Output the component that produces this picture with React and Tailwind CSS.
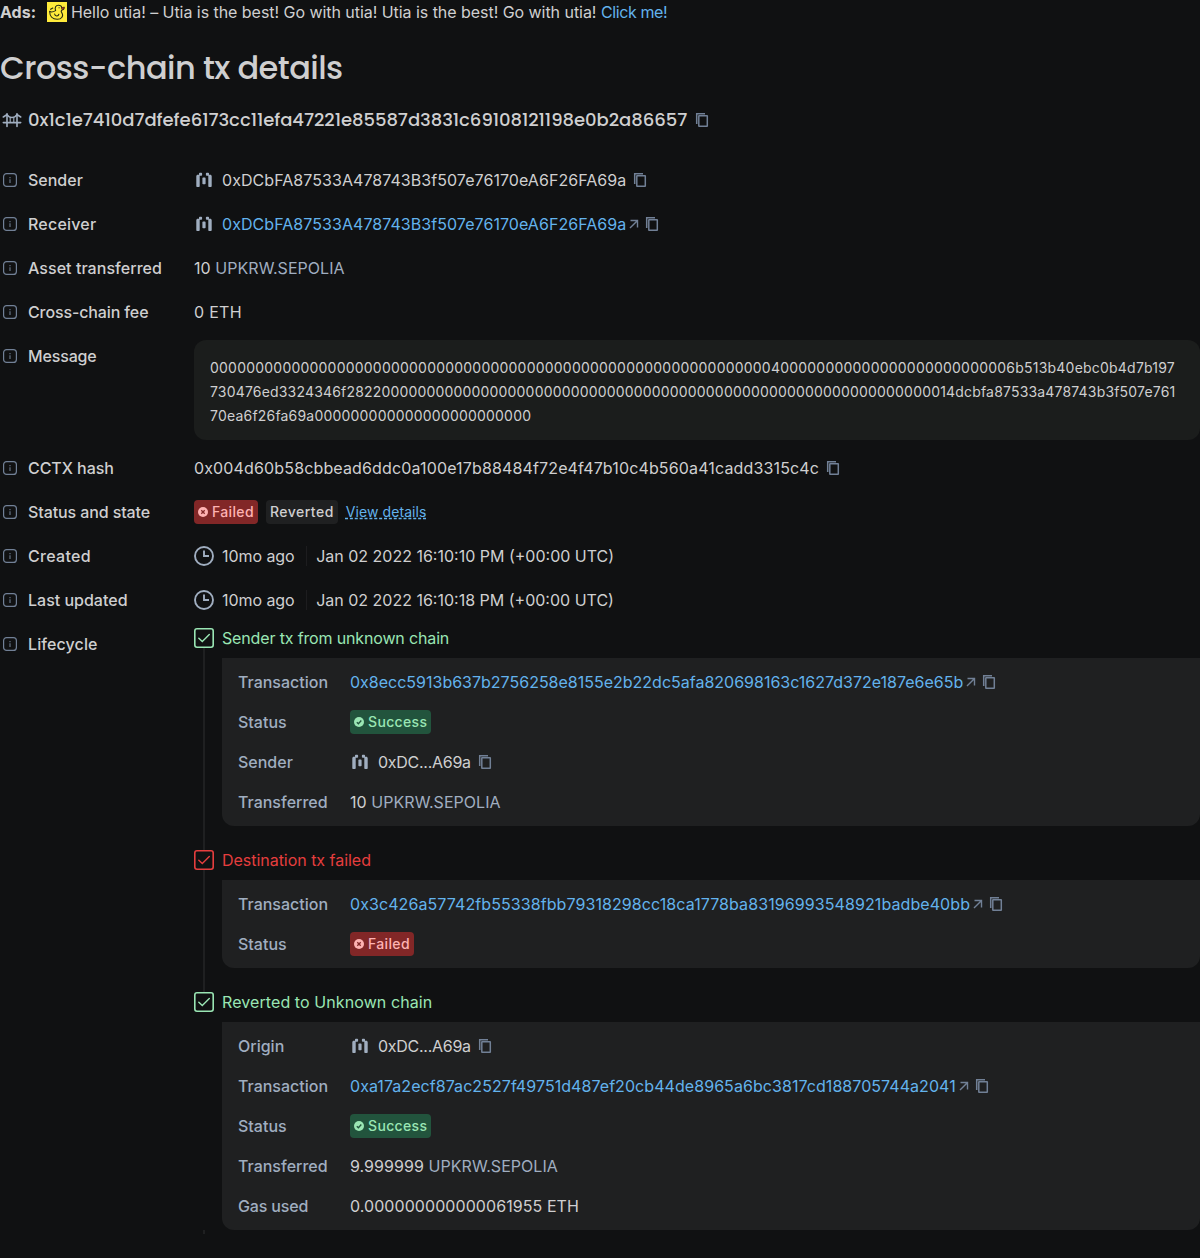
const Info = () => (
  <svg className="w-5 h-5 shrink-0 text-[#718096]" viewBox="0 0 20 20" fill="none">
    <rect x="3.6" y="3.6" width="12.8" height="12.8" rx="3" stroke="currentColor" strokeWidth="1.2" />
    <path d="M9.3 7h1.4v1.2H9.3zM9.3 9.2h1.4v3.8H9.3z" fill="currentColor" fillOpacity="0.75" />
  </svg>
);

const Copy = () => (
  <svg className="w-5 h-5 shrink-0 text-[#718096]" viewBox="0 0 20 20" fill="none" stroke="currentColor" strokeWidth="1.5">
    <path d="M4.7 14V3.8H13" />
    <rect x="6.8" y="5.8" width="8.5" height="10.5" rx="0.3" />
  </svg>
);

const Arrow = () => (
  <svg className="w-3 h-3 shrink-0 ml-[2px] text-[#718096]" viewBox="0 0 12 12" fill="none" stroke="currentColor" strokeWidth="1.4">
    <path d="M2.5 2.5H9.5V9.5M9.3 2.7L2 10" />
  </svg>
);

const Contract = () => (
  <svg className="w-5 h-5 shrink-0 text-[#A0AEC0]" viewBox="0 0 20 20" fill="currentColor">
    <path d="M2.3 6.2c0-.9.6-1.500 1.500-1.500h1.200V3.500c0-.5.300-.8.800-.8h1.500c.5 0 .8.3.8.8v1.500c0 .5-.3.800-.8.800H5.700v10.500c0 .5-.3.800-.8.800H3.100c-.5 0-.8-.3-.8-.8z" />
    <path d="M17.700 6.200c0-.9-.6-1.500-1.500-1.500h-1.200V3.500c0-.5-.300-.8-.8-.8h-1.500c-.5 0-.8.3-.8.8v1.500c0 .5.3.8.8.8h1.600v10.500c0 .5.3.8.8.8h1.800c.5 0 .8-.3.8-.8z" />
    <rect x="8.4" y="7.6" width="3.2" height="6.6" rx="0.8" />
  </svg>
);

const Clock = () => (
  <svg className="w-5 h-5 shrink-0 text-[#A0AEC0]" viewBox="0 0 20 20" fill="none" stroke="currentColor" strokeWidth="1.9">
    <circle cx="10" cy="10" r="9" />
    <path d="M10 4.5V10H15" />
  </svg>
);

const CheckSquare = () => (
  <svg className="w-5 h-5 shrink-0" viewBox="0 0 20 20" fill="none" stroke="currentColor">
    <rect x="0.8" y="0.8" width="18.4" height="18.4" rx="2.2" strokeWidth="1.6" />
    <path d="M4.8 10.2L8.3 13.6L15.3 6.6" strokeWidth="1.4" strokeLinecap="round" />
  </svg>
);

const Bridge = () => (
  <svg className="w-6 h-6 shrink-0 text-[#A0AEC0]" viewBox="0 0 24 24" fill="none" stroke="currentColor" strokeWidth="1.6" strokeLinecap="round">
    <path d="M7 5.8V18.4M17 5.8V18.4M3.3 14.6H20.7" />
    <path d="M3.3 9L7 6.6C8.5 8.7 10 9.5 12 9.5S15.5 8.7 17 6.6L20.7 9" />
    <path d="M10.2 9.5V14.4M13.8 9.5V14.4" strokeWidth="1.1" />
  </svg>
);

const Duck = () => (
  <svg className="w-5 h-5 mx-1 shrink-0 bg-[#FFEB3B]" viewBox="0 0 20 20" fill="none" stroke="#262a12" strokeWidth="1.1" strokeLinecap="round" strokeLinejoin="round">
    <path d="M8.6 8.6C7.4 5.6 8.9 3.300 11.300 3.300C13.400 3.300 14.700 4.600 14.800 6.100L17.200 5.300C17.300 6.800 16.300 7.900 14.600 8.100C14.200 9 13.700 9.600 14.700 10.500C17 14 14.600 17.300 10.200 17.300C5.500 17.300 2.700 14 2.600 9.300C4 10.400 6.300 10 8.600 8.600Z" />
    <path d="M3.600 7.300L5.800 6M7.600 12C8 14.500 11.300 14.700 11.900 12.200M12 5.800h.2" />
    <path d="M14.800 5.900L17.200 5.100L15.800 7.500Z" fill="#c0392b" stroke="#7a2c12" strokeWidth="0.600" />
  </svg>
);

const Tag = ({ ok }) => (
  <span className={`flex items-center h-6 px-1 rounded-[4px] text-sm leading-6 font-medium tracking-[0.35px] ${ok ? "bg-[#22543D] text-[#9AE6B4]" : "bg-[#822727] text-[#FEB2B2]"}`}>
    <svg className="w-[10px] h-[10px] mr-1" viewBox="0 0 10 10" fill="none">
      <circle cx="5" cy="5" r="5" fill="currentColor" />
      <path d={ok ? "M2.8 5.2L4.4 6.8L7.3 3.5" : "M3.3 3.3L6.7 6.7M6.7 3.3L3.3 6.7"} stroke={ok ? "#22543D" : "#822727"} strokeWidth="1.3" />
    </svg>
    {ok ? "Success" : "Failed"}
  </span>
);

const Address = ({ text, link, tracking = "tracking-[0.06px]" }) => (
  <>
    <Contract />
    <span className={`ml-2 ${tracking} ${link ? "text-[#63B3ED]" : ""}`}>{text}</span>
    {link && <Arrow />}
    <span className={link ? "ml-[2px] flex" : "ml-1 flex"}><Copy /></span>
  </>
);

const Tx = ({ text, tracking }) => (
  <>
    <span className={`text-[#63B3ED] ${tracking}`}>{text}</span>
    <Arrow />
    <span className="ml-[2px] flex"><Copy /></span>
  </>
);

const Amount = ({ value }) => (
  <span className="tracking-[0.05px]">{value} <span className="text-[#A0AEC0]">UPKRW.SEPOLIA</span></span>
);

const Time = ({ text }) => (
  <>
    <Clock />
    <span className="ml-2 tracking-[-0.06px]">10mo ago</span>
    <span className="w-px h-5 ml-[11px] mr-[9.5px] bg-[#1d1d1f]" />
    <span>{text}</span>
  </>
);

const Row = ({ label, tracking = "tracking-normal", children }) => (
  <div className="flex items-start min-h-8">
    <div className="flex items-center h-8 w-[194px] shrink-0 font-medium">
      <Info />
      <span className={`ml-2 ${tracking}`}>{label}</span>
    </div>
    <div className="flex items-center min-h-8 flex-1 min-w-0">{children}</div>
  </div>
);

const Step = ({ title, tracking, failed, last, rows }) => (
  <div className="flex">
    <div className={`flex flex-col w-5 shrink-0 ${failed ? "text-[#E53E3E]" : "text-[#9AE6B4]"}`}>
      <CheckSquare />
      <div className={last ? "w-[2px] h-1 ml-[9px] mt-auto bg-[#1f2021]" : "w-[2px] grow ml-[9px] bg-[#1f2021]"} />
    </div>
    <div className={last ? "flex-1 pl-2 pb-1" : "flex-1 pl-2 pb-6"}>
      <div className={`leading-5 ${tracking} ${failed ? "text-[#E53E3E]" : "text-[#9AE6B4]"}`}>{title}</div>
      <div className="mt-[10px] flex flex-col gap-4 px-4 py-3 rounded-b-xl bg-[#1f2021]">
        {rows.map(([label, value]) => (
          <div key={label} className="flex items-center h-6">
            <span className={`w-28 shrink-0 font-medium text-[#A0AEC0] ${label === "Gas used" ? "tracking-[-0.15px]" : ""}`}>{label}</span>
            {value}
          </div>
        ))}
      </div>
    </div>
  </div>
);

const MESSAGE = [
  ["00000000000000000000000000000000000000000000000000000000000000400000000000000000000000006b513b40ebc0b4d7b197", "tracking-[0.215px]"],
  ["730476ed3324346f28220000000000000000000000000000000000000000000000000000000000000014dcbfa87533a478743b3f507e761", "tracking-[0.18px]"],
  ["70ea6f26fa69a000000000000000000000000", "tracking-[0.2px]"],
];

const ADDRESS = "0xDCbFA87533A478743B3f507e76170eA6F26FA69a";

export default function App() {
  return (
    <div className="w-[1200px] h-[1258px] overflow-hidden bg-[#101112] text-[#cfcfd0] text-base leading-6 font-['Inter',sans-serif]">
      <div className="flex items-center h-6 whitespace-pre">
        <span className="font-bold mr-[7px]">Ads:</span>
        <Duck />
        <span className="tracking-[-0.045px]">Hello utia! – Utia is the best! Go with utia! Utia is the best! Go with utia! <span className="text-[#63B3ED] tracking-[-0.38px]">Click me!</span></span>
      </div>
      <h1 className="mt-6 h-10 w-max whitespace-nowrap font-['Poppins','Inter',sans-serif] font-medium text-[32px] leading-10 tracking-[-0.55px]">Cross-chain tx details</h1>
      <div className="flex items-center h-8 mt-4 font-medium text-lg">
        <Bridge />
        <span className="ml-1 font-['Poppins','Inter',sans-serif] tracking-[-0.036px]">0x1c1e7410d7dfefe6173cc11efa47221e85587d3831c69108121198e0b2a86657</span>
        <span className="ml-[5px] flex"><Copy /></span>
      </div>
      <div className="mt-7 flex flex-col gap-3">
        <Row label="Sender"><Address text={ADDRESS} /></Row>
        <Row label="Receiver" tracking="tracking-[0.2px]"><Address text={ADDRESS} link /></Row>
        <Row label="Asset transferred" tracking="tracking-[0.05px]"><Amount value="10" /></Row>
        <Row label="Cross-chain fee" tracking="tracking-[-0.12px]"><span className="tracking-[0.3px]">0 ETH</span></Row>
        <Row label="Message" tracking="tracking-[-0.15px]">
          <div className="w-full p-4 pb-3 h-[100px] rounded-xl bg-[#1b1d1c] text-sm leading-6 whitespace-nowrap">
            {MESSAGE.map(([line, tracking]) => <div key={line} className={tracking}>{line}</div>)}
          </div>
        </Row>
        <Row label="CCTX hash" tracking="tracking-[-0.06px]">
          <span className="tracking-[0.145px]">0x004d60b58cbbead6ddc0a100e17b88484f72e4f47b10c4b560a41cadd3315c4c</span>
          <span className="ml-1 flex"><Copy /></span>
        </Row>
        <Row label="Status and state" tracking="tracking-[-0.1px]">
          <div className="flex items-center gap-2 text-sm leading-6">
            <Tag />
            <span className="h-6 px-1 rounded-[4px] bg-[#1f2021] font-medium tracking-[0.48px]">Reverted</span>
            <span className="text-[#63B3ED] tracking-[0.08px] underline decoration-dashed [text-decoration-skip-ink:none]">View details</span>
          </div>
        </Row>
        <Row label="Created" tracking="tracking-[0.3px]"><Time text="Jan 02 2022 16:10:10 PM (+00:00 UTC)" /></Row>
        <Row label="Last updated"><Time text="Jan 02 2022 16:10:18 PM (+00:00 UTC)" /></Row>
        <Row label="Lifecycle" tracking="tracking-[0.1px]">
          <div className="flex flex-col w-full">
            <Step
              title="Sender tx from unknown chain"
              tracking="tracking-[-0.15px]"
              rows={[
                ["Transaction", <Tx text="0x8ecc5913b637b2756258e8155e2b22dc5afa820698163c1627d372e187e6e65b" tracking="tracking-normal" />],
                ["Status", <Tag ok />],
                ["Sender", <Address text="0xDC...A69a" tracking="tracking-[-0.27px]" />],
                ["Transferred", <Amount value="10" />],
              ]}
            />
            <Step
              title="Destination tx failed"
              tracking="tracking-[-0.03px]"
              failed
              rows={[
                ["Transaction", <Tx text="0x3c426a57742fb55338fbb79318298cc18ca1778ba83196993548921badbe40bb" tracking="tracking-[0.085px]" />],
                ["Status", <Tag />],
              ]}
            />
            <Step
              title="Reverted to Unknown chain"
              tracking="tracking-[0.09px]"
              last
              rows={[
                ["Origin", <Address text="0xDC...A69a" tracking="tracking-[-0.27px]" />],
                ["Transaction", <Tx text="0xa17a2ecf87ac2527f49751d487ef20cb44de8965a6bc3817cd188705744a2041" tracking="tracking-[0.06px]" />],
                ["Status", <Tag ok />],
                ["Transferred", <Amount value="9.999999" />],
                ["Gas used", <span className="tracking-[0.07px]">0.000000000000061955 ETH</span>],
              ]}
            />
          </div>
        </Row>
      </div>
    </div>
  );
}
